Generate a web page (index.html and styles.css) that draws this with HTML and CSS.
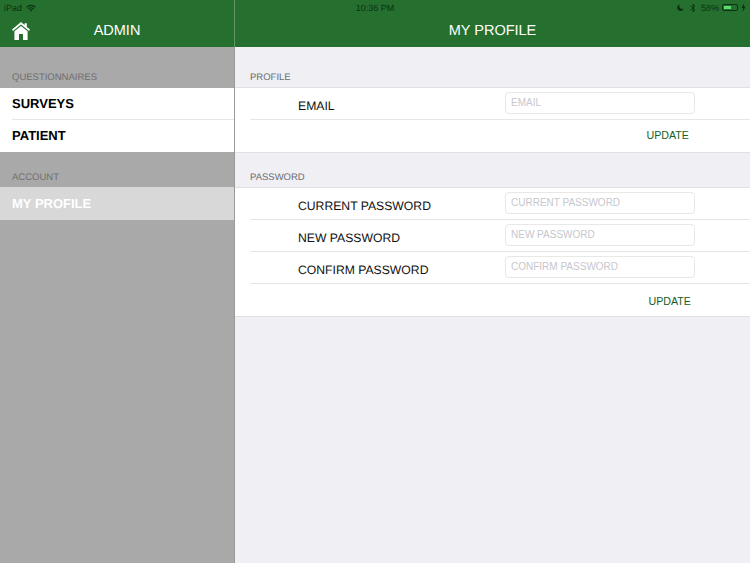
FILE: index.html
```html
<!DOCTYPE html>
<html lang="en">
<head>
    <meta charset="UTF-8">
    <meta name="viewport" content="width=device-width, initial-scale=1.0">
    <title>My Profile</title>
    <link rel="stylesheet" href="styles.css">
</head>
<body>

<div class="status-bar">
    <div class="status-left">
        <span>iPad</span>
        <svg class="wifi" viewBox="0 0 12 9" width="10" height="8">
            <path d="M0.3 3 A8 8 0 0 1 11.7 3 L10.6 4.2 A6.4 6.4 0 0 0 1.4 4.2 Z"/>
            <path d="M2.3 5 A5.2 5.2 0 0 1 9.7 5 L8.6 6.2 A3.6 3.6 0 0 0 3.4 6.2 Z"/>
            <path d="M4.3 7 A2.4 2.4 0 0 1 7.7 7 L6 8.8 Z"/>
        </svg>
    </div>
    <div class="status-time">10:36 PM</div>
    <div class="status-right">
        <svg class="moon" viewBox="0 0 8 8" width="7" height="7">
            <path d="M3 0.5 A3.8 3.8 0 1 0 7.6 5.4 A3.6 3.6 0 0 1 3 0.5 Z"/>
        </svg>
        <svg class="bluetooth" viewBox="0 0 6 10" width="6" height="10">
            <path d="M0.5 2.6 L5 7 L3 9 L3 1 L5 3 L0.5 7.4"/>
        </svg>
        <span>58%</span>
        <div class="battery"><div class="battery-level"></div></div>
        <svg class="charge" viewBox="0 0 5 9" width="5" height="9">
            <path d="M3.2 0 L0.4 5 L2.2 5 L1.6 9 L4.6 3.6 L2.7 3.6 Z"/>
        </svg>
    </div>
</div>

<div class="app">
    <aside class="sidebar">
        <header class="nav nav-admin">
            <svg class="home-icon" viewBox="0 0 18 18" width="18" height="18">
                <path d="M9 0 L12.6 3 L12.6 1.2 L14.8 1.2 L14.8 4.9 L18 7.6 L17 9 L9 2.4 L1 9 L0 7.6 Z"/>
                <path d="M9 3.9 L15.6 9.3 L15.6 18 L11 18 L11 12 L7 12 L7 18 L2.4 18 L2.4 9.3 Z"/>
            </svg>
            <h1>ADMIN</h1>
        </header>

        <h2 class="section-title first">QUESTIONNAIRES</h2>
        <ul class="menu">
            <li>SURVEYS</li>
            <li>PATIENT</li>
        </ul>

        <h2 class="section-title">ACCOUNT</h2>
        <ul class="menu">
            <li class="active">MY PROFILE</li>
        </ul>
    </aside>

    <main class="content">
        <header class="nav">
            <h1>MY PROFILE</h1>
        </header>

        <h2 class="section-title first">PROFILE</h2>
        <form class="group" action="#" method="post">
            <div class="form-row">
                <label for="email">EMAIL</label>
                <input type="text" id="email" placeholder="EMAIL">
            </div>
            <div class="action-row">
                <button type="submit">UPDATE</button>
            </div>
        </form>

        <h2 class="section-title">PASSWORD</h2>
        <form class="group" action="#" method="post">
            <div class="form-row">
                <label for="current">CURRENT PASSWORD</label>
                <input type="password" id="current" placeholder="CURRENT PASSWORD">
            </div>
            <div class="form-row">
                <label for="new">NEW PASSWORD</label>
                <input type="password" id="new" placeholder="NEW PASSWORD">
            </div>
            <div class="form-row">
                <label for="confirm">CONFIRM PASSWORD</label>
                <input type="password" id="confirm" placeholder="CONFIRM PASSWORD">
            </div>
            <div class="action-row action-wide">
                <button type="submit">UPDATE</button>
            </div>
        </form>
    </main>
</div>

</body>
</html>
```

FILE: styles.css
```css
body {
    font-family: 'Liberation Sans', Arial, sans-serif;
    text-rendering: geometricPrecision;
    margin: 0;
    padding: 0;
    height: 563px;
    overflow: hidden;
    position: relative;
    background-color: #efeff4;
}
h1, h2, ul {
    margin: 0;
    padding: 0;
    font-weight: 400;
}
ul {
    list-style: none;
}

/* status bar sits over the green headers */
.status-bar {
    position: absolute;
    top: 0;
    left: 0;
    right: 0;
    height: 15px;
    padding: 0 4px;
    box-sizing: border-box;
    display: grid;
    grid-template-columns: 1fr auto 1fr;
    align-items: center;
    font-size: 9px;
    color: #0c3012;
}
.status-bar svg {
    fill: #0c3012;
}
.status-left {
    display: flex;
    align-items: center;
    gap: 4px;
}
.status-right {
    display: flex;
    align-items: center;
    justify-content: flex-end;
    gap: 3px;
}
.status-right .moon {
    margin-right: 3px;
}
.status-right .bluetooth {
    fill: none;
    stroke: #0c3012;
    stroke-width: 0.9;
    margin-right: 2px;
}
.battery {
    width: 16px;
    height: 7px;
    border: 1px solid #0c3012;
    border-radius: 2px;
    box-sizing: border-box;
    padding: 1px;
}
.battery-level {
    width: 58%;
    height: 100%;
    background-color: #59dc6c;
}

.app {
    display: grid;
    grid-template-columns: 235px 1fr;
    height: 563px;
}
.nav {
    height: 47px;
    padding-top: 15px;
    box-sizing: border-box;
    background-color: #25702f;
    display: flex;
    align-items: center;
    justify-content: center;
}
.nav h1 {
    font-size: 14.5px;
    color: #ffffff;
}
.nav-admin {
    display: grid;
    grid-template-columns: 1fr auto 1fr;
    padding-left: 12px;
    padding-right: 12px;
}
.home-icon {
    fill: #ffffff;
    grid-column: 1;
}
.nav-admin h1 {
    grid-column: 2;
}

.sidebar {
    background-color: #a9a9a9;
    border-right: 1px solid #9a9a9a;
}
.sidebar .nav {
    border-right: 1px solid #5f9567;
    margin-right: -1px;
}
.section-title {
    font-size: 9.5px;
    line-height: 12px;
    padding: 19px 0 3px 15px;
    color: #6d6d72;
}
.section-title.first {
    padding-top: 25px;
}
.sidebar .section-title {
    padding-top: 20px;
    padding-left: 12px;
    color: #6f6f6f;
}
.sidebar .section-title.first {
    padding-top: 25px;
    padding-bottom: 4px;
}

.menu {
    background-color: #ffffff;
}
.menu li {
    height: 32px;
    line-height: 31px;
    margin-left: 12px;
    box-sizing: border-box;
    font-size: 13px;
    font-weight: 700;
    color: #000000;
    border-bottom: 1px solid #e6e6e6;
}
.menu li:last-child {
    border-bottom: none;
}
.menu li.active {
    height: 33px;
    line-height: 33px;
    margin-left: 0;
    padding-left: 12px;
    background-color: #d8d8d8;
    color: #ffffff;
}

.group {
    background-color: #ffffff;
    border-top: 1px solid #e0e0e5;
    border-bottom: 1px solid #e0e0e5;
}
.form-row {
    display: grid;
    grid-template-columns: 207px 190px;
    align-items: center;
    height: 32px;
    box-sizing: border-box;
    margin-left: 15px;
    padding-left: 48px;
    border-bottom: 1px solid #e6e6e6;
}
.form-row label {
    font-size: 12.2px;
    color: #111111;
    padding-top: 4px;
}
.form-row input {
    align-self: start;
    width: 100%;
    height: 22px;
    margin: 4px 0 0;
    padding: 0 5px 1px;
    box-sizing: border-box;
    border: 1px solid #e8e8e8;
    border-radius: 4px;
    font-family: inherit;
    font-size: 10px;
    background-color: #ffffff;
}
.form-row input::placeholder {
    color: #c7c7cd;
    opacity: 1;
}
.action-row {
    height: 32px;
    padding-bottom: 2px;
    box-sizing: border-box;
    display: flex;
    align-items: center;
    justify-content: flex-end;
    padding-right: 61px;
}
.action-row.action-wide {
    padding-bottom: 0;
    padding-top: 2px;
    padding-right: 59px;
}
.action-row button {
    border: none;
    padding: 0;
    background: none;
    font-family: inherit;
    font-size: 10.7px;
    color: #14601f;
}
```
